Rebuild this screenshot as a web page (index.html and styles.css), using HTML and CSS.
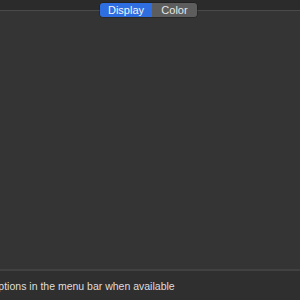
FILE: index.html
```html
<!DOCTYPE html>
<html>
<head>
<meta charset="utf-8">
<link rel="stylesheet" href="styles.css">
</head>
<body>
<div class="window">
  <div class="top">
    <div class="seg">
      <span class="tab active">Display</span>
      <span class="tab">Color</span>
    </div>
  </div>
  <div class="panel"></div>
  <div class="footer">
    <span class="opt">Show mirroring options in the menu bar when available</span>
  </div>
</div>
</body>
</html>
```
FILE: styles.css
```css
html, body {
  margin: 0;
  padding: 0;
  width: 300px;
  height: 300px;
  overflow: hidden;
  background: #2e2e2e;
  font-family: "Liberation Sans", Arial, sans-serif;
}
.window {
  display: flex;
  flex-direction: column;
  width: 300px;
  height: 300px;
}
.top {
  position: relative;
  height: 10px;
  background: #2b2b2b;
  border-bottom: 1px solid #4a4a4a;
  flex: none;
}
.seg {
  position: absolute;
  left: 100px;
  top: 3px;
  display: flex;
  height: 14px;
  border-radius: 3px;
  overflow: hidden;
  box-shadow: 0 0 0 0.5px rgba(0,0,0,0.4);
}
.tab {
  display: flex;
  align-items: center;
  justify-content: center;
  font-size: 11px;
  color: #e6e6e6;
  background: #5d5d5d;
  width: 45px;
}
.tab.active {
  background: #2f6ee0;
  color: #f2f4fa;
  width: 52px;
}
.panel {
  flex: 1;
  background: #343434;
  border-bottom: 2px solid #414141;
}
.footer {
  height: 29px;
  flex: none;
  background: #2f2f2f;
  display: flex;
  align-items: center;
  overflow: hidden;
  white-space: nowrap;
}
.opt {
  font-size: 10.5px;
  color: #dedede;
  margin-left: -81px;
}
```
